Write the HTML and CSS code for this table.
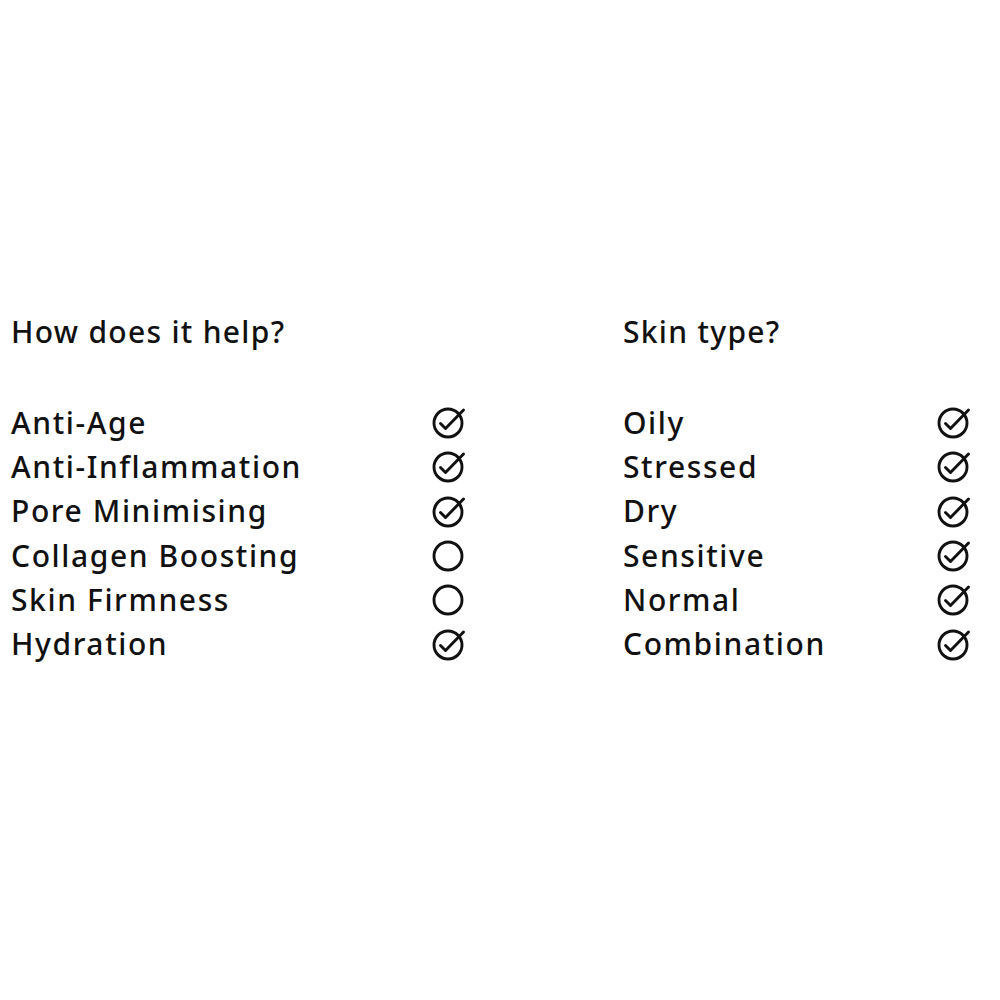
FILE: index.html
```html
<!DOCTYPE html>
<html lang="en">
<head>
<meta charset="utf-8">
<title>Benefits</title>
<link rel="stylesheet" href="styles.css">
</head>
<body>
<svg width="0" height="0" class="defs">
  <symbol id="chk" viewBox="0 0 36 36">
    <circle cx="16" cy="19" r="14" fill="none" stroke="currentColor" stroke-width="2.9"/>
    <path d="M8.5 19.5 L13.5 24.5 L31.5 6" fill="none" stroke="currentColor" stroke-width="2.9" stroke-linecap="round" stroke-linejoin="round"/>
  </symbol>
  <symbol id="emp" viewBox="0 0 36 36">
    <circle cx="16" cy="19" r="14" fill="none" stroke="currentColor" stroke-width="2.9"/>
  </symbol>
</svg>
<main class="wrap">
  <section class="col col-left">
    <h2 class="title">How does it help?</h2>
    <ul class="list">
      <li class="row"><span>Anti-Age</span><svg class="ico"><use href="#chk"/></svg></li>
      <li class="row"><span>Anti-Inflammation</span><svg class="ico"><use href="#chk"/></svg></li>
      <li class="row"><span>Pore Minimising</span><svg class="ico"><use href="#chk"/></svg></li>
      <li class="row"><span>Collagen Boosting</span><svg class="ico"><use href="#emp"/></svg></li>
      <li class="row"><span>Skin Firmness</span><svg class="ico"><use href="#emp"/></svg></li>
      <li class="row"><span>Hydration</span><svg class="ico"><use href="#chk"/></svg></li>
    </ul>
  </section>
  <section class="col col-right">
    <h2 class="title">Skin type?</h2>
    <ul class="list">
      <li class="row"><span>Oily</span><svg class="ico"><use href="#chk"/></svg></li>
      <li class="row"><span>Stressed</span><svg class="ico"><use href="#chk"/></svg></li>
      <li class="row"><span>Dry</span><svg class="ico"><use href="#chk"/></svg></li>
      <li class="row"><span>Sensitive</span><svg class="ico"><use href="#chk"/></svg></li>
      <li class="row"><span>Normal</span><svg class="ico"><use href="#chk"/></svg></li>
      <li class="row"><span>Combination</span><svg class="ico"><use href="#chk"/></svg></li>
    </ul>
  </section>
</main>
</body>
</html>
```
FILE: styles.css
```css
html, body {
  margin: 0;
  padding: 0;
  background: #fff;
}
body {
  font-family: "Noto Sans", "Lato", sans-serif;
  color: #111;
}
.defs {
  position: absolute;
  width: 0;
  height: 0;
}
.wrap {
  display: grid;
  grid-template-columns: 457px 350px;
  column-gap: 155px;
  padding: 310px 0 0 11px;
}
.title {
  margin: 0 0 46px;
  font-size: 30px;
  font-weight: 500;
  line-height: 44px;
  letter-spacing: 1.3px;
}
.list {
  list-style: none;
  margin: 0;
  padding: 0;
}
.row {
  display: flex;
  justify-content: space-between;
  align-items: center;
  height: 44.3px;
  font-size: 30px;
  font-weight: 500;
  letter-spacing: 1.6px;
}
.ico {
  width: 36px;
  height: 36px;
  color: #111;
  flex: none;
}
```
